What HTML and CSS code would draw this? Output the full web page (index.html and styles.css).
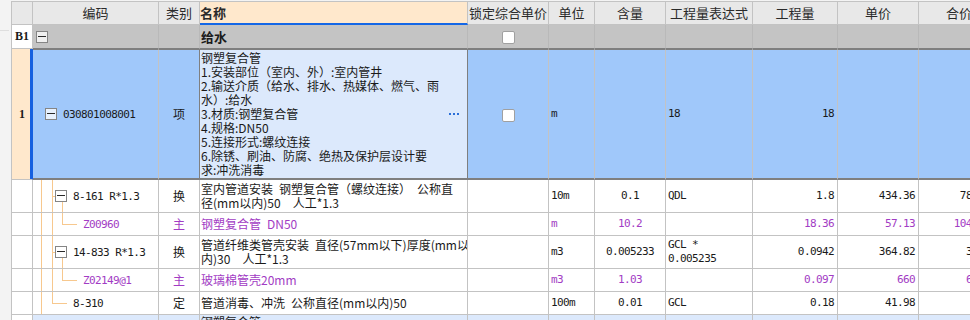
FILE: index.html
```html
<!DOCTYPE html>
<html lang="zh-CN">
<head>
  <meta charset="UTF-8" />
  <title>分部分项</title>
  <link rel="stylesheet" href="styles.css">
</head>
<body>
  <div class="sheet">
    <!-- 左侧空白边 -->
    <div class="gutter"><div class="gutter-top"></div></div>

    <table class="grid">
      <colgroup>
        <col class="c-no"><col class="c-code"><col class="c-cat"><col class="c-name">
        <col class="c-lock"><col class="c-unit"><col class="c-qty"><col class="c-expr">
        <col class="c-amount"><col class="c-price"><col class="c-total">
      </colgroup>

      <!-- 表头 -->
      <tr class="head">
        <th></th>
        <th>编码</th>
        <th>类别</th>
        <th class="name-head">名称</th>
        <th>锁定综合单价</th>
        <th>单位</th>
        <th>含量</th>
        <th>工程量表达式</th>
        <th>工程量</th>
        <th>单价</th>
        <th>合价</th>
      </tr>

      <!-- 分部 B1 -->
      <tr class="section">
        <td class="no">B1</td>
        <td class="code lv-section"><div class="node"><span class="toggle"></span></div></td>
        <td></td>
        <td class="name"><b>给水</b></td>
        <td class="lock"><span class="check"></span></td>
        <td></td><td></td><td></td><td></td><td></td><td></td>
      </tr>

      <!-- 清单项 1 (选中) -->
      <tr class="item selected">
        <td class="no">1</td>
        <td class="code lv-root t-root"><div class="node"><span class="toggle"></span><span class="mono">030801008001</span></div></td>
        <td class="cat">项</td>
        <td class="name">
          <div class="name-wrap">
            <div>钢塑复合管<br>1.安装部位（室内、外）:室内管井<br>2.输送介质（给水、排水、热媒体、燃气、雨<br>水）:给水<br>3.材质:钢塑复合管<br>4.规格:DN50<br>5.连接形式:螺纹连接<br>6.除锈、刷油、防腐、绝热及保护层设计要<br>求:冲洗消毒</div>
            <svg class="more" width="12" height="4" viewBox="0 0 12 4"><rect x="1" y="1" width="2" height="2"/><rect x="5" y="1" width="2" height="2"/><rect x="9" y="1" width="2" height="2"/></svg>
          </div>
        </td>
        <td class="lock"><span class="check"></span></td>
        <td class="mono">m</td>
        <td></td>
        <td class="mono">18</td>
        <td class="mono right">18</td>
        <td></td>
        <td></td>
      </tr>

      <!-- 定额子目 -->
      <tr class="sub tall">
        <td class="no"></td>
        <td class="code lv-sub t-sub"><div class="node"><span class="toggle"></span><span class="mono">8-161 R*1.3</span></div></td>
        <td class="cat">换</td>
        <td class="name">室内管道安装&ensp;钢塑复合管（螺纹连接）&ensp;公称直<br>径(mm以内)50&ensp;&ensp;人工*1.3</td>
        <td></td>
        <td class="mono">10m</td>
        <td class="mono center">0.1</td>
        <td class="mono">QDL</td>
        <td class="mono right">1.8</td>
        <td class="mono right">434.36</td>
        <td class="mono right">781.85</td>
      </tr>

      <tr class="sub main">
        <td class="no"></td>
        <td class="code lv-leaf t-leaf"><div class="node"><span class="mono">Z00960</span></div></td>
        <td class="cat">主</td>
        <td class="name">钢塑复合管&ensp;DN50</td>
        <td></td>
        <td class="mono">m</td>
        <td class="mono center">10.2</td>
        <td></td>
        <td class="mono right">18.36</td>
        <td class="mono right">57.13</td>
        <td class="mono right">1048.91</td>
      </tr>

      <tr class="sub tall">
        <td class="no"></td>
        <td class="code lv-sub t-sub"><div class="node"><span class="toggle"></span><span class="mono">14-833 R*1.3</span></div></td>
        <td class="cat">换</td>
        <td class="name">管道纤维类管壳安装&ensp;直径(57mm以下)厚度(mm以<br>内)30&ensp;&ensp;人工*1.3</td>
        <td></td>
        <td class="mono">m3</td>
        <td class="mono center">0.005233</td>
        <td class="mono">GCL *<br>0.005235</td>
        <td class="mono right">0.0942</td>
        <td class="mono right">364.82</td>
        <td class="mono right">34.37</td>
      </tr>

      <tr class="sub main">
        <td class="no"></td>
        <td class="code lv-leaf t-leaf"><div class="node"><span class="mono">Z02149@1</span></div></td>
        <td class="cat">主</td>
        <td class="name">玻璃棉管壳20mm</td>
        <td></td>
        <td class="mono">m3</td>
        <td class="mono center">1.03</td>
        <td></td>
        <td class="mono right">0.097</td>
        <td class="mono right">660</td>
        <td class="mono right">64.02</td>
      </tr>

      <tr class="sub">
        <td class="no"></td>
        <td class="code lv-last t-last"><div class="node"><span class="mono">8-310</span></div></td>
        <td class="cat">定</td>
        <td class="name">管道消毒、冲洗&ensp;公称直径(mm以内)50</td>
        <td></td>
        <td class="mono">100m</td>
        <td class="mono center">0.01</td>
        <td class="mono">GCL</td>
        <td class="mono right">0.18</td>
        <td class="mono right">41.98</td>
        <td class="mono right">7.56</td>
      </tr>

      <!-- 下一条清单 (露出一部分) -->
      <tr class="item next">
        <td class="no"></td>
        <td class="code t-tail"></td>
        <td></td>
        <td class="name top">钢塑复合管</td>
        <td></td><td></td><td></td><td></td><td></td><td></td><td></td>
      </tr>
    </table>
  </div>
</body>
</html>
```

FILE: styles.css
```css
/* ===== 基础 ===== */
body {
  margin: 0;
  background: #f3f3f3;
  overflow: hidden;
  font: 12px "Noto Sans CJK SC", sans-serif;
  color: #1a1a1a;
  --line: #c3c3c3;
  --dark: #7f7f7f;
  --tree: #f7c88e;
  --purple: #a23cc4;
}

.sheet {
  display: flex;
  align-items: flex-start;
}

.gutter {
  width: 11px;
  flex: none;
}
.gutter-top {
  width: 9px;
  height: 30px;
  border-bottom: 1px solid #dedede;
}

/* ===== 表格 ===== */
.grid {
  flex: none;
  width: 989px;
  margin-top: 1px;
  table-layout: fixed;
  border-collapse: separate;
  border-spacing: 0;
  border-top: 1px solid var(--line);
  border-left: 1px solid var(--line);
  background: #fff;
}

.c-no { width: 21px; }
.c-code { width: 126px; }
.c-cat { width: 41px; }
.c-name { width: 268px; }
.c-lock { width: 81px; }
.c-unit { width: 46px; }
.c-qty { width: 71px; }
.c-expr { width: 87px; }
.c-amount { width: 85px; }
.c-price { width: 81px; }
.c-total { width: 81px; }

.grid th,
.grid td {
  box-sizing: border-box;
  padding: 0 2px;
  border-right: 1px solid var(--line);
  border-bottom: 1px solid var(--line);
  white-space: nowrap;
  overflow: hidden;
  line-height: 14px;
  vertical-align: middle;
  text-align: left;
}

/* ===== 表头 ===== */
.head th {
  height: 23px;
  background: #e8e8e8;
  font-size: 13px;
  font-weight: 400;
  color: #2a2a2a;
  text-align: center;
  padding: 0;
}
.head th.name-head {
  text-align: left;
  font-weight: 700;
  background: #ffe8cc;
  border-bottom: 2px solid #1567e6;
}

/* ===== 行高 ===== */
.section td { height: 24px; }
.item.selected td { height: 131px; }
.sub td { height: 23px; }
.sub.tall td { height: 33px; }
.next td { height: 30px; }

/* ===== 行号列 ===== */
.grid td.no {
  padding: 0;
  text-align: center;
  font: 700 12px "Liberation Serif", serif;
  background: #fff;
}

/* ===== 分部行 ===== */
.section td {
  background: #c4c4c4;
  border-right-color: #b9b9b9;
  border-bottom-color: var(--dark);
}
.section td.no { border-bottom-color: var(--line); border-right-color: var(--line); }
.section .name b {
  font-size: 13px;
}

/* ===== 选中清单行 ===== */
.selected td {
  background: #a0c8fa;
  border-top: 1px solid var(--dark);
  border-bottom: 2px solid var(--dark);
}
.selected td.no {
  background: #ffe8cc;
  border-top: none;
  border-bottom: 1px solid var(--line);
  border-right-color: #1560e0;
  box-shadow: inset -2px 0 0 #1560e0;
}
.selected td.cat { border-right-color: var(--dark); }
.selected td.name {
  background: #dce9fc;
  border-right-color: var(--dark);
  vertical-align: middle;
}
.next td { background: #dce9fc; vertical-align: top; }
.next td.no { background: #fff; }

.name-wrap {
  display: flex;
  align-items: center;
  justify-content: space-between;
  padding-right: 5px;
}
.more { fill: #2b6fd8; }

.grid td.name { padding-left: 1px; }
.cat { text-align: center !important; }

/* ===== 数字 / 编码 ===== */
.mono {
  font: 11px "DejaVu Sans Mono", monospace;
  letter-spacing: -0.6px;
}
td.right { text-align: right; padding-right: 3px; }
td.center { text-align: center; }

/* 主材行 紫色 */
.main td { color: var(--purple); }

/* ===== 锁定复选框 ===== */
.grid td.lock { text-align: center; padding: 0; }
.check {
  display: inline-block;
  box-sizing: border-box;
  width: 13px;
  height: 13px;
  border: 1px solid #a0a0a0;
  border-radius: 2px;
  background: #fff;
  vertical-align: middle;
}

/* ===== 编码树 ===== */
.grid td.code {
  padding: 0;
  background-repeat: no-repeat;
}
.node {
  display: flex;
  align-items: center;
  gap: 6px;
}
.toggle {
  position: relative;
  flex: none;
  width: 10px;
  height: 10px;
  border: 1px solid #858585;
  background: rgba(255, 255, 255, 0.75);
}
.toggle::before {
  content: "";
  position: absolute;
  left: 1px;
  top: 4px;
  width: 8px;
  height: 1px;
  background: #2a2a2a;
}

.lv-section .node { padding-left: 3px; }
.lv-root .node { padding-left: 12px; }
.lv-sub .node { padding-left: 22px; }
.lv-last .node { padding-left: 40px; }
.lv-leaf .node { padding-left: 50px; }

.t-root {
  background-image:
    linear-gradient(var(--tree), var(--tree)),
    linear-gradient(var(--tree), var(--tree)),
    linear-gradient(var(--tree), var(--tree));
  background-position: 8px 0, 8px 50%, 19px 100%;
  background-size: 1px 100%, 4px 1px, 1px calc(50% - 6px);
}
.t-sub {
  background-image:
    linear-gradient(var(--tree), var(--tree)),
    linear-gradient(var(--tree), var(--tree)),
    linear-gradient(var(--tree), var(--tree)),
    linear-gradient(var(--tree), var(--tree));
  background-position: 8px 0, 19px 0, 19px 50%, 29px 100%;
  background-size: 1px 100%, 1px 100%, 3px 1px, 1px calc(50% - 6px);
}
.t-leaf {
  background-image:
    linear-gradient(var(--tree), var(--tree)),
    linear-gradient(var(--tree), var(--tree)),
    linear-gradient(var(--tree), var(--tree)),
    linear-gradient(var(--tree), var(--tree));
  background-position: 8px 0, 19px 0, 29px 0, 29px 50%;
  background-size: 1px 100%, 1px 100%, 1px 50%, 15px 1px;
}
.t-last {
  background-image:
    linear-gradient(var(--tree), var(--tree)),
    linear-gradient(var(--tree), var(--tree)),
    linear-gradient(var(--tree), var(--tree));
  background-position: 8px 0, 19px 0, 19px 50%;
  background-size: 1px 100%, 1px 50%, 15px 1px;
}
.t-tail {
  background-image: linear-gradient(var(--tree), var(--tree));
  background-position: 8px 0;
  background-size: 1px 100%;
}
.grid td.top { padding-top: 0; line-height: 12px; vertical-align: top; }
.next td.name { padding-top: 1px; }
```
